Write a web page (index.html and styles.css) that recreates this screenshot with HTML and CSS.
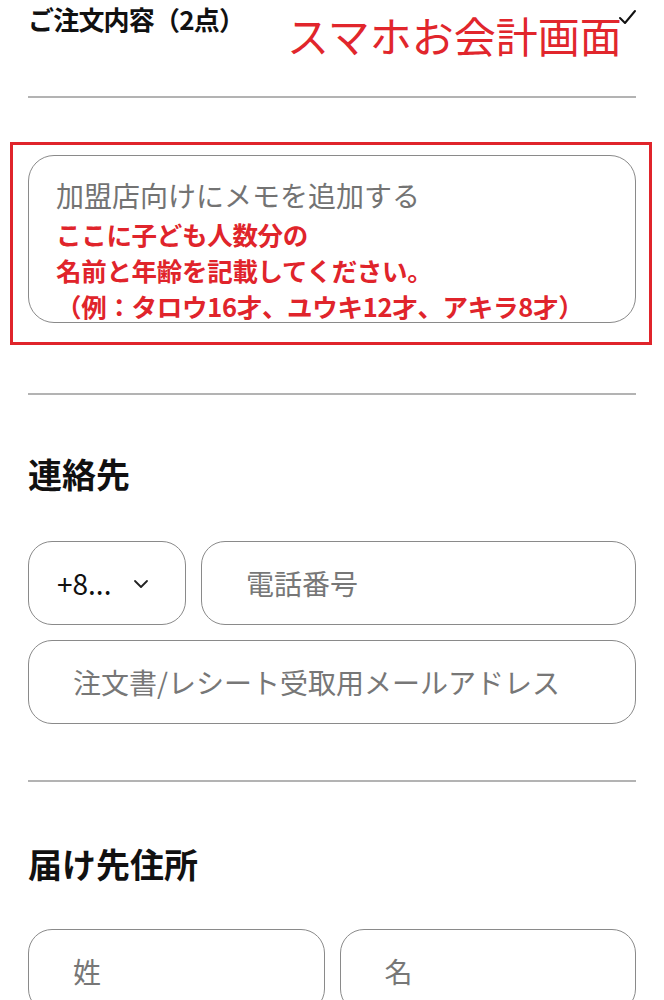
FILE: index.html
```html
<!DOCTYPE html>
<html lang="ja">
<head>
<meta charset="utf-8">
<link rel="stylesheet" href="styles.css">
</head>
<body>
<div class="page">
  <header class="order-head">
    <h2 class="order-title">ご注文内容（2点）</h2>
    <svg class="check" width="20" height="20" viewBox="0 0 20 20"><path d="M2 10 L7 15 L17 3" fill="none" stroke="#111" stroke-width="2" stroke-linecap="round" stroke-linejoin="round"/></svg>
    <span class="annot">スマホお会計画面</span>
  </header>
  <hr class="rule">
  <div class="memo-frame">
    <div class="memo">
      <p class="memo-ph">加盟店向けにメモを追加する</p>
      <p class="memo-note">ここに子ども人数分の<br>名前と年齢を記載してください。<br>（例：タロウ16才、ユウキ12才、アキラ8才）</p>
    </div>
  </div>
  <hr class="rule rule-2">
  <h3 class="sec-title sec-contact">連絡先</h3>
  <div class="row">
    <div class="field field-select">
      <span class="code">+8...</span>
      <svg class="chev" width="16" height="10" viewBox="0 0 16 10"><path d="M2 2 L8 8 L14 2" fill="none" stroke="#222" stroke-width="1.8" stroke-linecap="round" stroke-linejoin="round"/></svg>
    </div>
    <div class="field grow"><span class="ph">電話番号</span></div>
  </div>
  <div class="field field-email"><span class="ph">注文書/レシート受取用メールアドレス</span></div>
  <hr class="rule rule-3">
  <h3 class="sec-title sec-address">届け先住所</h3>
  <div class="row">
    <div class="field grow"><span class="ph">姓</span></div>
    <div class="field grow"><span class="ph">名</span></div>
  </div>
</div>
</body>
</html>
```

FILE: styles.css
```css
* { box-sizing: border-box; }
html, body { margin: 0; padding: 0; background: #fff; }
body {
  font-family: "Noto Sans CJK JP", "Noto Sans", sans-serif;
  color: #111;
}
.page {
  padding: 0 28px;
  width: 664px;
  overflow: hidden;
}
.order-head {
  position: relative;
  height: 96px;
}
.order-title {
  margin: 0;
  font-size: 26px;
  line-height: 38px;
  font-weight: 700;
  letter-spacing: -0.8px;
}
.check {
  position: absolute;
  right: -2px;
  top: 8px;
}
.annot {
  position: absolute;
  left: 259px;
  top: 14px;
  font-size: 42px;
  line-height: 1;
  color: #e1262c;
  font-weight: 400;
  white-space: nowrap;
}
.rule {
  margin: 0;
  border: 0;
  height: 2px;
  background: #b3b3b3;
}
.memo-frame {
  margin: 44px -16px 0 -18px;
  border: 3px solid #e0242b;
  padding: 10px 13px 19px 15px;
}
.memo {
  height: 168px;
  border: 1.5px solid #8a8a8a;
  border-radius: 26px;
  padding: 18px 10px 0 27px;
}
.memo-ph {
  margin: 0;
  font-size: 28px;
  line-height: 42px;
  color: #737373;
}
.memo-note {
  margin: 0;
  font-size: 25.5px;
  line-height: 36px;
  font-weight: 700;
  color: #e0242b;
  white-space: nowrap;
  letter-spacing: -0.3px;
}
.rule-2 { margin-top: 48px; }
.sec-title {
  margin: 0;
  font-size: 34px;
  line-height: 44px;
  font-weight: 700;
}
.sec-contact { margin-top: 57px; }
.sec-address { margin-top: 60px; }
.row {
  display: flex;
  gap: 15px;
  margin-top: 45px;
}
.sec-address + .row { margin-top: 43px; }
.field {
  height: 84px;
  border: 1.5px solid #8a8a8a;
  border-radius: 24px;
  display: flex;
  align-items: center;
  padding-left: 44px;
  font-size: 28px;
}
.grow { flex: 1; }
.field-select {
  width: 158px;
  padding-left: 28px;
  gap: 22px;
}
.code {
  font-size: 28px;
  color: #111;
}
.chev { margin-top: 2px; }
.ph { color: #777; }
.field-email {
  margin-top: 15px;
}
.rule-3 { margin-top: 56px; }
```
